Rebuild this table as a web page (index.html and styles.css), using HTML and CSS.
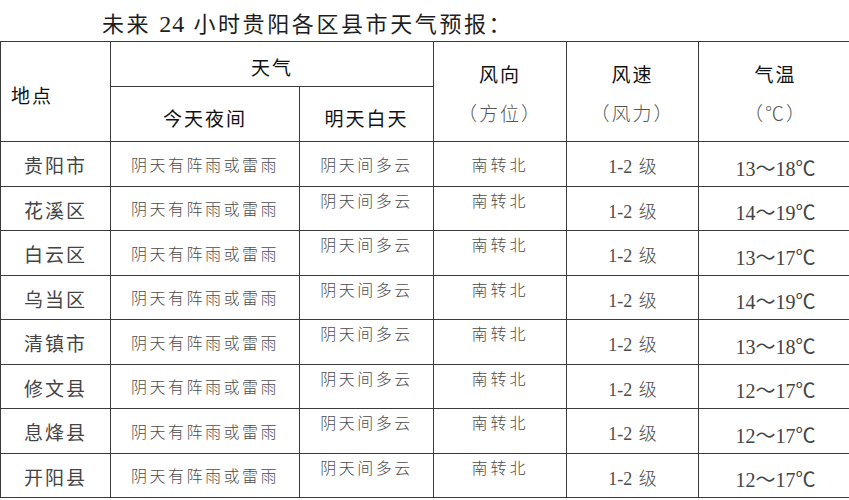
FILE: index.html
```html
<!DOCTYPE html>
<html lang="zh-CN">
<head>
<meta charset="utf-8">
<title>未来24小时贵阳各区县市天气预报</title>
<link rel="stylesheet" href="styles.css">
</head>
<body>
<div class="page">
  <div class="title">未来 <span class="num">24</span> 小时贵阳各区县市天气预报：</div>
  <table class="forecast">
    <colgroup>
      <col class="c-place"><col class="c-night"><col class="c-day"><col class="c-dir"><col class="c-speed"><col class="c-temp">
    </colgroup>
    <thead>
      <tr class="h1">
        <th rowspan="2" class="place-h">地点</th>
        <th colspan="2" class="weather-h">天气</th>
        <th rowspan="2" class="two"><span class="main">风向</span><span class="sub">（方位）</span></th>
        <th rowspan="2" class="two"><span class="main">风速</span><span class="sub">（风力）</span></th>
        <th rowspan="2" class="two"><span class="main">气温</span><span class="sub">（℃）</span></th>
      </tr>
      <tr class="h2">
        <th class="sub-h">今天夜间</th>
        <th class="sub-h">明天白天</th>
      </tr>
    </thead>
    <tbody>
      <tr class="first">
        <td class="place">贵阳市</td><td class="desc">阴天有阵雨或雷雨</td><td class="desc day">阴天间多云</td><td class="desc dir">南转北</td><td class="speed">1-2 级</td><td class="temp">13～18℃</td>
      </tr>
      <tr>
        <td class="place">花溪区</td><td class="desc">阴天有阵雨或雷雨</td><td class="desc day top">阴天间多云</td><td class="desc dir top">南转北</td><td class="speed">1-2 级</td><td class="temp">14～19℃</td>
      </tr>
      <tr>
        <td class="place">白云区</td><td class="desc">阴天有阵雨或雷雨</td><td class="desc day top">阴天间多云</td><td class="desc dir top">南转北</td><td class="speed">1-2 级</td><td class="temp">13～17℃</td>
      </tr>
      <tr>
        <td class="place">乌当区</td><td class="desc">阴天有阵雨或雷雨</td><td class="desc day top">阴天间多云</td><td class="desc dir top">南转北</td><td class="speed">1-2 级</td><td class="temp">14～19℃</td>
      </tr>
      <tr>
        <td class="place">清镇市</td><td class="desc">阴天有阵雨或雷雨</td><td class="desc day top">阴天间多云</td><td class="desc dir top">南转北</td><td class="speed">1-2 级</td><td class="temp">13～18℃</td>
      </tr>
      <tr>
        <td class="place">修文县</td><td class="desc">阴天有阵雨或雷雨</td><td class="desc day top">阴天间多云</td><td class="desc dir top">南转北</td><td class="speed">1-2 级</td><td class="temp">12～17℃</td>
      </tr>
      <tr>
        <td class="place">息烽县</td><td class="desc">阴天有阵雨或雷雨</td><td class="desc day top">阴天间多云</td><td class="desc dir top">南转北</td><td class="speed">1-2 级</td><td class="temp">12～17℃</td>
      </tr>
      <tr>
        <td class="place">开阳县</td><td class="desc">阴天有阵雨或雷雨</td><td class="desc day top">阴天间多云</td><td class="desc dir top">南转北</td><td class="speed">1-2 级</td><td class="temp">12～17℃</td>
      </tr>
    </tbody>
  </table>
</div>
</body>
</html>
```

FILE: styles.css
```css
html, body {
  margin: 0;
  padding: 0;
  background: #ffffff;
  overflow: hidden;
}
body {
  font-family: "Liberation Serif", "Noto Sans CJK SC", serif;
  color: #333;
}
.page {
  width: 849px;
  height: 500px;
  overflow: hidden;
}
.title {
  height: 41px;
  box-sizing: border-box;
  padding: 10px 0 0 102px;
  font-size: 22px;
  line-height: 28px;
  letter-spacing: 2.6px;
  color: #1e1e1e;
  white-space: nowrap;
}
.title .num {
  font-size: 24px;
  letter-spacing: 1px;
}
.forecast {
  border-collapse: collapse;
  table-layout: fixed;
  width: 852px;
}
.c-place { width: 110px; }
.c-night { width: 189px; }
.c-day { width: 134px; }
.c-dir { width: 133px; }
.c-speed { width: 132px; }
.c-temp { width: 154px; }
.forecast th, .forecast td {
  border: 1px solid #3a3a3a;
  padding: 0;
  text-align: center;
  white-space: nowrap;
}
.forecast th {
  font-weight: 400;
  color: #111;
  font-size: 19px;
  letter-spacing: 2px;
}
.h1 { height: 45px; }
.h2 { height: 55px; }
.place-h {
  text-align: left !important;
  padding-left: 10px !important;
  padding-top: 6px !important;
}
.weather-h {
  padding-top: 4px !important;
}
.sub-h {
  padding-top: 6px !important;
}
.two .main, .two .sub {
  display: block;
}
.two .main {
  line-height: 26px;
  padding-top: 8px;
}
.two .sub {
  font-weight: 300;
  color: #555;
  margin-top: 13px;
  line-height: 26px;
}
tbody tr { height: 44.5px; }
.place {
  font-size: 19px;
  letter-spacing: 2px;
  color: #444;
  padding-top: 2px !important;
}
.desc {
  font-size: 16px;
  font-weight: 300;
  letter-spacing: 2.5px;
  color: #4d4d4d;
}
.dir {
  letter-spacing: 3px;
}
.top {
  vertical-align: top;
  padding-top: 1px !important;
}
.speed {
  font-size: 18px;
  font-weight: 300;
  color: #4d4d4d;
  padding-top: 3px !important;
  word-spacing: 2px;
}
.temp {
  font-size: 20px;
  color: #444;
  padding-top: 7px !important;
}
```
